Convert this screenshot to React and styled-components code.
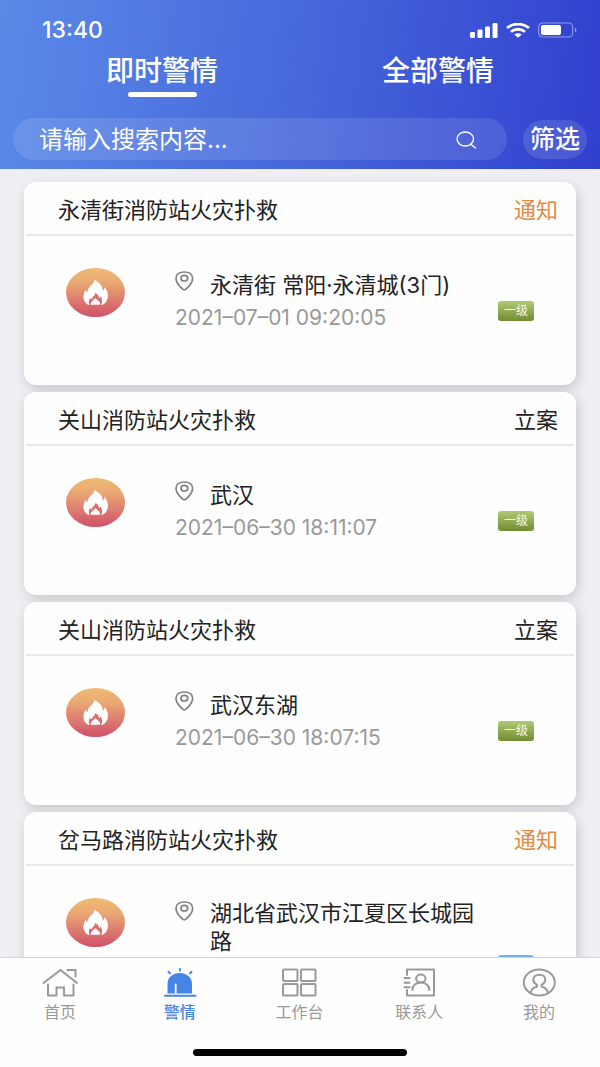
import React, { useState } from 'react';
import styled, { createGlobalStyle } from 'styled-components';

const GlobalStyle = createGlobalStyle`
    * {
        box-sizing: border-box;
    }
    body {
        margin: 0;
        background-color: #efeef3;
        font-family: Inter, "Noto Sans CJK SC", sans-serif;
        color: #222;
    }
    button, input {
        font-family: inherit;
    }
    button {
        padding: 0;
        border: none;
        background: none;
        cursor: pointer;
    }
    svg {
        display: block;
    }
`
const Page = styled.div`
    height: 100vh;
    display: flex;
    flex-direction: column;
`
const Header = styled.header`
    flex: none;
    padding-bottom: 9px;
    color: white;
    background: linear-gradient(97deg, #5a8ae8 0%, #4666da 52%, #3040ce 100%);
`
const StatusBar = styled.div`
    display: flex;
    justify-content: space-between;
    align-items: center;
    height: 50px;
    padding: 10px 23px 0 42px;
    font-size: 23px;
    font-weight: 500;
`
const StatusIcons = styled.div`
    display: flex;
    align-items: center;
    gap: 8px;
`
const Tabs = styled.nav`
    display: flex;
    padding: 0 24px;
`
const Tab = styled.button`
    flex: 1;
    height: 48px;
    display: flex;
    flex-direction: column;
    align-items: center;
    color: white;
    font-size: 28px;
    font-weight: 500;
    line-height: 42px;

    &::after {
        content: '';
        width: 69px;
        height: 5px;
        border-radius: 3px;
        background-color: ${props => props.$active ? 'white' : 'transparent'};
    }
`
const SearchRow = styled.form`
    display: flex;
    align-items: center;
    gap: 16px;
    padding: 20px 13px 0;
`
const SearchBox = styled.div`
    flex: 1;
    display: flex;
    align-items: center;
    height: 42px;
    padding: 1px 30px 0 26px;
    border-radius: 21px;
    background-color: rgba(255, 255, 255, 0.11);
`
const SearchInput = styled.input`
    flex: 1;
    min-width: 0;
    padding: 0;
    border: none;
    outline: none;
    background: none;
    color: white;
    font-size: 24px;
    line-height: 36px;

    &::placeholder {
        color: white;
        opacity: 1;
    }
`
const FilterButton = styled.button`
    width: 64px;
    height: 39px;
    border-radius: 20px;
    background-color: rgba(255, 255, 255, 0.12);
    color: white;
    font-size: 25px;
    font-weight: 500;
    line-height: 36px;
`
const List = styled.main`
    flex: 1;
    min-height: 0;
    overflow-y: auto;
    scrollbar-width: none;
    display: flex;
    flex-direction: column;
    gap: 7px;
    padding: 13px 24px;
`
const Card = styled.article`
    flex: none;
    min-height: 203px;
    border-radius: 12px;
    background-color: #fefefe;
    box-shadow: 2px 4px 12px rgba(0, 0, 0, 0.16);
`
const CardHead = styled.div`
    display: flex;
    justify-content: space-between;
    align-items: center;
    height: 54px;
    margin: 0 2px;
    padding: 4px 16px 0 32px;
    border-bottom: 2px solid #e8e8e8;
`
const CardTitle = styled.h2`
    margin: 0;
    font-size: 22px;
    font-weight: 400;
    line-height: 32px;
`
const CardStatus = styled.span`
    font-size: 22px;
    line-height: 32px;
    color: ${props => props.$notice ? '#e08a45' : '#222'};
`
const CardBody = styled.div`
    display: flex;
    align-items: flex-start;
    padding: 32px 42px 24px;
`
const CardInfo = styled.div`
    flex: 1;
    min-width: 0;
    margin: 0 12px 0 50px;
    padding-top: 1px;
`
const Address = styled.div`
    display: flex;
    align-items: flex-start;
    gap: 16px;
    min-height: 32px;

    svg {
        flex: none;
        margin-top: 2px;
    }
    p {
        align-self: center;
        margin: 0;
        font-size: 22px;
        line-height: 28px;
    }
`
const Time = styled.time`
    display: block;
    margin-top: 5px;
    color: #999;
    font-size: 21px;
    line-height: 24px;
    white-space: nowrap;
`
const Level = styled.span`
    align-self: flex-end;
    width: 36px;
    height: 20px;
    margin-bottom: 9px;
    border-radius: 3px;
    color: #f4f8ea;
    font-size: 12px;
    line-height: 20px;
    text-align: center;
    background: ${props => props.$color === 'blue'
        ? 'linear-gradient(#74b6f2, #3f86d8)'
        : 'linear-gradient(#aecb74, #738c34)'};
`
const BottomBar = styled.footer`
    flex: none;
    border-top: 1px solid #d4d4d8;
    background-color: #fefefe;
`
const BottomNav = styled.nav`
    display: flex;
    padding: 9px 1px 0 0;
`
const NavItem = styled.button`
    flex: 1;
    display: flex;
    flex-direction: column;
    align-items: center;
    gap: 1px;
    color: ${props => props.$active ? '#4585e8' : '#999'};
    font-size: 16px;
    font-weight: ${props => props.$active ? 500 : 400};
    line-height: 24px;
`
const HomeIndicator = styled.div`
    width: 214px;
    height: 7px;
    margin: 25px auto 11px;
    border-radius: 4px;
    background-color: black;
`

const SignalIcon = () => (
    <svg width="28" height="15" viewBox="0 0 28 15" fill="white">
        <rect x="0" y="9" width="5" height="6" rx="1.2" />
        <rect x="7.5" y="6.5" width="5" height="8.5" rx="1.2" />
        <rect x="15" y="3.5" width="5" height="11.5" rx="1.2" />
        <rect x="22.5" y="0" width="5" height="15" rx="1.2" />
    </svg>
);

const WifiIcon = () => (
    <svg width="24" height="15" viewBox="0 0 24 15">
        <g fill="none" stroke="white" strokeWidth="2.8">
            <path d="M1 5 C7 -0.2 17 -0.2 23 5" />
            <path d="M5 8.8 C9 5.4 15 5.4 19 8.8" />
        </g>
        <path d="M8.3 11.6 C10.5 9.8 13.5 9.8 15.7 11.6 L12 14.8 Z" fill="white" />
    </svg>
);

const BatteryIcon = () => (
    <svg width="39" height="16" viewBox="0 0 39 16">
        <rect x="0.7" y="1" width="34" height="14" rx="4" fill="none" stroke="white" strokeOpacity="0.45" strokeWidth="1.2" />
        <rect x="3" y="3" width="20" height="10" rx="2" fill="white" />
        <path d="M37 5.5 C39 6.5 39 9.5 37 10.5 Z" fill="white" fillOpacity="0.5" />
    </svg>
);

const SearchIcon = () => (
    <svg width="21" height="18" viewBox="0 0 21 18" fill="none" stroke="white" strokeWidth="1.4" strokeLinecap="round">
        <ellipse cx="9.3" cy="8" rx="8.2" ry="7" />
        <path d="M14.5 13 L19.5 17" />
    </svg>
);

const FireIcon = () => (
    <svg width="59" height="49" viewBox="0 0 59 49">
        <defs>
            <linearGradient id="fire" x1="0" y1="0" x2="0" y2="1">
                <stop offset="0" stopColor="#f0bb72" />
                <stop offset="0.3" stopColor="#e9a873" />
                <stop offset="1" stopColor="#d1506a" />
            </linearGradient>
        </defs>
        <ellipse cx="29.5" cy="24.5" rx="29.5" ry="24.5" fill="url(#fire)" />
        <path
            d="M28 12 C33 14 37 18 36.7 22.5 C38 22 38.5 20.5 38.7 19 C41.5 22.5 42.5 26.5 41.6 30.5 C40.7 34 38.5 36 36 37 L22.5 37 C19 35 17 32 17.5 28 C17.8 25.5 18.5 23.5 19.8 21.5 C20 23 20.6 23.8 21.5 24 C21.5 21 23 19 25.5 17 C27.5 15.5 28.2 14 28 12 Z"
            fill="white"
        />
        <path
            d="M29 25 C31.8 26.3 33 28 33 30.2 C33.8 29.9 34.2 29.2 34.3 28.3 C36.3 30.5 36.6 34 35.2 37 L23.4 37 C22.4 34.5 22.7 31.5 24.2 29.7 C24.5 30.8 25 31.3 25.8 31.3 C25.8 28.8 29.5 28 29 25 Z"
            fill="#d96c6d"
        />
        <path d="M29.3 29.8 C29.8 31.2 32 31.6 32.4 33 C33.8 33.3 34.4 35 33.8 36.8 L24.8 36.8 C24.3 35.2 25 33.7 26.4 33.2 C26.6 31.9 29.2 31.5 29.3 29.8 Z" fill="white" />
    </svg>
);

const PinIcon = () => (
    <svg width="19" height="20" viewBox="0 0 19 20" fill="none" stroke="#808080" strokeWidth="1.7">
        <path d="M9.3 1 C14.5 1 17.6 3.6 17.6 7.4 C17.6 11.6 13 16.2 11 18 C10 19 8.6 19 7.6 18 C5.6 16.2 1 11.6 1 7.4 C1 3.6 4.1 1 9.3 1 Z" />
        <ellipse cx="9.3" cy="7.2" rx="3.4" ry="2.8" />
    </svg>
);

const NavIcon = ({ children }) => (
    <svg width="38" height="32" viewBox="0 0 38 32" fill="none" stroke="currentColor" strokeWidth="2" strokeLinecap="round" strokeLinejoin="round">
        {children}
    </svg>
);

const HomeIcon = () => (
    <NavIcon>
        <path d="M2.5 16 L19.5 3 L36 16" />
        <path d="M26.5 3 H34.5 V9.5" />
        <path d="M7 17.5 V28.5 H15.5 V20.5 H23 V28.5 H32.5 V17.5" />
    </NavIcon>
);

const AlarmIcon = () => (
    <NavIcon>
        <path d="M6.5 26.5 V17 C6.5 10 12 6 18.7 6 C25.4 6 31 10 31 17 V26.5 Z" fill="currentColor" stroke="none" />
        <path d="M14.7 17.5 V25.8" stroke="white" strokeWidth="1.8" />
        <path d="M4 28.7 H34.5" />
        <path d="M19 2 V3.5 M7.5 4.7 L9 6.4 M30.5 4.7 L29 6.4" />
    </NavIcon>
);

const WorkIcon = () => (
    <NavIcon>
        <rect x="3" y="2.5" width="14.5" height="11.5" rx="1" />
        <rect x="21" y="2.5" width="14.5" height="11.5" rx="1" />
        <rect x="3" y="17" width="14.5" height="11.5" rx="1" />
        <rect x="21" y="17" width="14.5" height="11.5" rx="1" />
    </NavIcon>
);

const ContactIcon = () => (
    <NavIcon>
        <path d="M7 8 V2.5 H34 V28.5 H7 V23" />
        <path d="M4.5 11 H9.5 M4.5 15.7 H9.5 M4.5 20.3 H9.5" />
        <ellipse cx="20.8" cy="11.5" rx="4.7" ry="4" />
        <path d="M12.3 23 C12.3 18.5 16 15.5 20.8 15.5 C25.6 15.5 29.3 18.5 29.3 23" />
    </NavIcon>
);

const MineIcon = () => (
    <NavIcon>
        <ellipse cx="19.3" cy="15.5" rx="15.5" ry="13" />
        <path d="M10.5 26 C11 22.5 13.5 20.7 17 19.5 V17.8 C14.5 16.5 13.3 14.8 13.3 12.8 C13.3 9.8 15.8 7.7 19.3 7.7 C22.8 7.7 25.3 9.8 25.3 12.8 C25.3 14.8 24.1 16.5 21.6 17.8 V19.5 C25.1 20.7 27.6 22.5 28.1 26" />
    </NavIcon>
);

const alarms = [
    { id: 1, title: '永清街消防站火灾扑救', status: '通知', address: '永清街 常阳·永清城(3门)', time: '2021–07–01 09:20:05', level: '一级', color: 'green' },
    { id: 2, title: '关山消防站火灾扑救', status: '立案', address: '武汉', time: '2021–06–30 18:11:07', level: '一级', color: 'green' },
    { id: 3, title: '关山消防站火灾扑救', status: '立案', address: '武汉东湖', time: '2021–06–30 18:07:15', level: '一级', color: 'green' },
    { id: 4, title: '岔马路消防站火灾扑救', status: '通知', address: '湖北省武汉市江夏区长城园路', color: 'blue' },
];

const navItems = [
    { name: '首页', Icon: HomeIcon },
    { name: '警情', Icon: AlarmIcon },
    { name: '工作台', Icon: WorkIcon },
    { name: '联系人', Icon: ContactIcon },
    { name: '我的', Icon: MineIcon },
];

const AlarmCard = ({ alarm }) => (
    <Card>
        <CardHead>
            <CardTitle>{alarm.title}</CardTitle>
            <CardStatus $notice={alarm.status === '通知'}>{alarm.status}</CardStatus>
        </CardHead>
        <CardBody>
            <FireIcon />
            <CardInfo>
                <Address>
                    <PinIcon />
                    <p>{alarm.address}</p>
                </Address>
                <Time>{alarm.time || '\u00a0'}</Time>
            </CardInfo>
            <Level $color={alarm.color}>{alarm.level}</Level>
        </CardBody>
    </Card>
);

const App = () => {
    const [tab, setTab] = useState('即时警情');
    const [page, setPage] = useState('警情');
    const [keyword, setKeyword] = useState('');

    return (
        <Page>
            <GlobalStyle />
            <Header>
                <StatusBar>
                    <span>13:40</span>
                    <StatusIcons>
                        <SignalIcon />
                        <WifiIcon />
                        <BatteryIcon />
                    </StatusIcons>
                </StatusBar>
                <Tabs>
                    {['即时警情', '全部警情'].map((name) => (
                        <Tab key={name} $active={tab === name} onClick={() => setTab(name)}>{name}</Tab>
                    ))}
                </Tabs>
                <SearchRow onSubmit={(e) => e.preventDefault()}>
                    <SearchBox>
                        <SearchInput
                            aria-label="搜索"
                            placeholder="请输入搜索内容..."
                            value={keyword}
                            onChange={(e) => setKeyword(e.target.value)}
                        />
                        <button type="submit" aria-label="搜索">
                            <SearchIcon />
                        </button>
                    </SearchBox>
                    <FilterButton type="button">筛选</FilterButton>
                </SearchRow>
            </Header>
            <List>
                {alarms.map((alarm) => <AlarmCard key={alarm.id} alarm={alarm} />)}
            </List>
            <BottomBar>
                <BottomNav>
                    {navItems.map(({ name, Icon }) => (
                        <NavItem key={name} $active={page === name} onClick={() => setPage(name)}>
                            <Icon />
                            {name}
                        </NavItem>
                    ))}
                </BottomNav>
                <HomeIndicator />
            </BottomBar>
        </Page>
    );
};

export default App;
